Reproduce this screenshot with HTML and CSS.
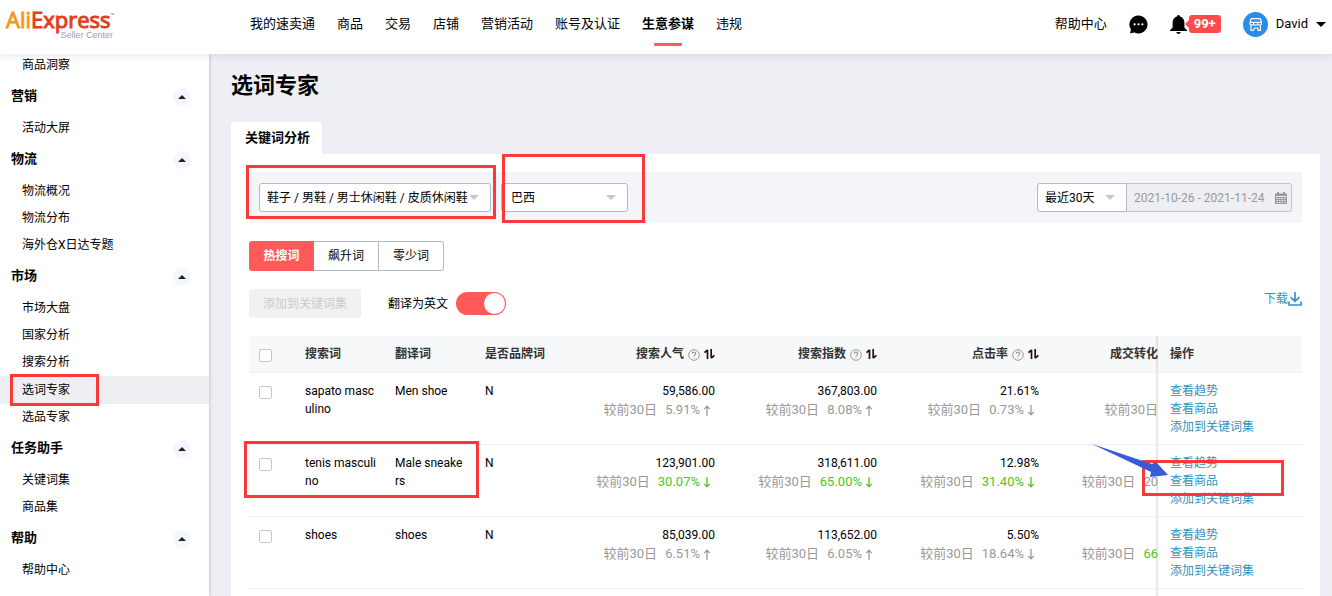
FILE: index.html
```html
<!DOCTYPE html>
<html lang="zh-CN">
<head>
<meta charset="utf-8">
<title>选词专家</title>
<link rel="stylesheet" href="styles.css">
</head>
<body>
<svg class="defs" aria-hidden="true">
  <symbol id="up" viewBox="0 0 8 12"><path d="M4 12V1.5M1 4.5L4 1.2L7 4.5" fill="none" stroke="currentColor" stroke-width="1.4"/></symbol>
  <symbol id="down" viewBox="0 0 8 12"><path d="M4 0V10.5M1 7.5L4 10.8L7 7.5" fill="none" stroke="currentColor" stroke-width="1.4"/></symbol>
  <symbol id="help" viewBox="0 0 12 12"><circle cx="6" cy="6" r="5.3" fill="none" stroke="#999"/><path d="M4.2 4.8C4.2 2.6 7.8 2.6 7.8 4.8C7.8 6 6 6 6 7.3M6 8.2V9.3" fill="none" stroke="#999" stroke-width="1.1"/></symbol>
  <symbol id="sort" viewBox="0 0 11 10"><path d="M3.5 10V.8M.5 3.6L3.6 1M7.2 0V9.2M10.4 6.4L7.2 9" fill="none" stroke="#2a0d0d" stroke-width="1.7"/></symbol>
</svg>
<header class="topbar">
  <a class="logo" href="#"><span class="logo-name"><span class="logo-ali">Ali</span>Express<span class="logo-tm">™</span></span><span class="logo-sub">Seller Center</span></a>
  <nav class="nav">
    <a href="#">我的速卖通</a><a href="#">商品</a><a href="#">交易</a><a href="#">店铺</a><a href="#">营销活动</a><a href="#">账号及认证</a><a href="#" class="current">生意参谋</a><a href="#">违规</a>
  </nav>
  <div class="tools">
    <a href="#">帮助中心</a>
    <button class="icon-btn chat" aria-label="消息"><svg width="19" height="19" viewBox="0 0 19 19"><path d="M9.5.5A9 9 0 1 1 5.6 17.6L1 18.2L2 14.6A9 9 0 0 1 9.5.5Z"/><g fill="#fff"><circle cx="5.6" cy="9.3" r="1.1"/><circle cx="9.5" cy="9.3" r="1.1"/><circle cx="13.4" cy="9.3" r="1.1"/></g></svg></button>
    <button class="icon-btn bell" aria-label="通知"><svg width="17" height="19" viewBox="0 0 17 19"><path d="M8.5 0C9.6 0 10 .8 10 1.6C12.8 2.3 14.4 4.7 14.4 7.6V12.5L17 15.2V16H0V15.2L2.6 12.5V7.6C2.6 4.7 4.2 2.3 7 1.6C7 .8 7.4 0 8.5 0ZM6.3 17H10.7C10.5 18.3 9.6 19 8.5 19S6.5 18.3 6.3 17Z"/></svg><span class="count">99+</span></button>
    <button class="icon-btn user"><svg width="25" height="25" viewBox="0 0 25 25"><circle cx="12.5" cy="12.5" r="12.5" fill="#2b8ce6"/><path d="M7.5 10V8Q7.5 6.7 9 6.7H16.5Q18 6.7 18 8V10M6.5 10.3H19M7 10.5V12Q7 13.2 8.6 13.2T10.6 12V10.5M10.6 12Q10.8 13.2 12.7 13.2T14.8 12V10.5M14.8 12Q15 13.2 16.7 13.2T18.5 12V10.5M8 13.4V18.5H10.3L11.5 16H15V18.5H17.4V13.4" fill="none" stroke="#fff" stroke-width="1.2"/></svg>David<svg width="10" height="5" viewBox="0 0 10 5"><path d="M0 0H10L5 5Z"/></svg></button>
  </div>
</header>
<div class="body">
  <aside class="sidebar">
    <ul class="menu">
      <li><a href="#">商品洞察</a></li>
      <li><button class="group">营销<i></i></button></li>
      <li><a href="#">活动大屏</a></li>
      <li><button class="group">物流<i></i></button></li>
      <li><a href="#">物流概况</a></li>
      <li><a href="#">物流分布</a></li>
      <li><a href="#">海外仓X日达专题</a></li>
      <li><button class="group">市场<i></i></button></li>
      <li><a href="#">市场大盘</a></li>
      <li><a href="#">国家分析</a></li>
      <li><a href="#">搜索分析</a></li>
      <li><a href="#" class="active">选词专家</a></li>
      <li><a href="#">选品专家</a></li>
      <li><button class="group">任务助手<i></i></button></li>
      <li><a href="#">关键词集</a></li>
      <li><a href="#">商品集</a></li>
      <li><button class="group">帮助<i></i></button></li>
      <li><a href="#">帮助中心</a></li>
    </ul>
  </aside>
  <main class="main">
    <h1>选词专家</h1>
    <button class="tab">关键词分析</button>
    <section class="panel">
      <div class="filters">
        <select class="field category" aria-label="类目"><option>鞋子 / 男鞋 / 男士休闲鞋 / 皮质休闲鞋</option></select>
        <select class="field country" aria-label="国家"><option>巴西</option></select>
        <div class="dates">
          <select class="field period" aria-label="周期"><option>最近30天</option></select>
          <label class="range"><input type="text" value="2021-10-26 - 2021-11-24" aria-label="日期范围" readonly>
            <svg width="12" height="12" viewBox="0 0 12 12"><path d="M0 1.5H2V0H4V1.5H8V0H10V1.5H12V12H0Z" fill="#999"/><path d="M1 4.5H11" stroke="#eeeff3"/><path d="M1.5 6.5H11M1.5 8.5H11M1.5 10.5H11" stroke="#eeeff3" stroke-dasharray="1.5 1"/></svg></label>
        </div>
      </div>
      <div class="segments"><button class="on">热搜词</button><button>飙升词</button><button>零少词</button></div>
      <div class="actions">
        <button class="add" disabled>添加到关键词集</button>
        <label class="translate">翻译为英文<input type="checkbox" class="switch" checked></label>
        <a class="download" href="#">下载<svg width="14" height="14" viewBox="0 0 14 14"><path d="M7 0V9M2.6 5.2L7 9.4L11.4 5.2M1 9.5V13H13V9.5" fill="none" stroke="currentColor" stroke-width="1.7"/></svg></a>
      </div>
      <div class="table-wrap">
        <table>
          <colgroup><col class="c-check"><col class="c-word"><col class="c-word"><col class="c-brand"><col class="c-num"><col class="c-num"><col class="c-num"><col class="c-cut"><col class="c-op"></colgroup>
          <thead><tr>
            <th><input type="checkbox" aria-label="全选"></th><th>搜索词</th><th>翻译词</th><th>是否品牌词</th>
            <th class="num">搜索人气<svg class="help"><use href="#help"/></svg><svg class="sort"><use href="#sort"/></svg></th>
            <th class="num">搜索指数<svg class="help"><use href="#help"/></svg><svg class="sort"><use href="#sort"/></svg></th>
            <th class="num">点击率<svg class="help"><use href="#help"/></svg><svg class="sort"><use href="#sort"/></svg></th>
            <th class="cut">成交转化</th>
            <th class="op">操作</th>
          </tr></thead>
          <tbody>
            <tr>
              <td><input type="checkbox" aria-label="sapato masculino"></td><td class="word">sapato masculino</td><td class="word">Men shoe</td><td>N</td>
              <td class="num">59,586.00<div class="trend">较前30日<span>5.91%<svg><use href="#up"/></svg></span></div></td>
              <td class="num">367,803.00<div class="trend">较前30日<span>8.08%<svg><use href="#up"/></svg></span></div></td>
              <td class="num">21.61%<div class="trend">较前30日<span>0.73%<svg><use href="#down"/></svg></span></div></td>
              <td class="cut"><div class="trend">较前30日</div></td>
              <td class="op"><a href="#">查看趋势</a><a href="#">查看商品</a><a href="#">添加到关键词集</a></td>
            </tr>
            <tr>
              <td><input type="checkbox" aria-label="tenis masculino"></td><td class="word">tenis masculino</td><td class="word">Male sneakers</td><td>N</td>
              <td class="num">123,901.00<div class="trend">较前30日<span class="green">30.07%<svg><use href="#down"/></svg></span></div></td>
              <td class="num">318,611.00<div class="trend">较前30日<span class="green">65.00%<svg><use href="#down"/></svg></span></div></td>
              <td class="num">12.98%<div class="trend">较前30日<span class="green">31.40%<svg><use href="#down"/></svg></span></div></td>
              <td class="cut"><div class="trend">较前30日<span>20</span></div></td>
              <td class="op"><a href="#">查看趋势</a><a href="#">查看商品</a><a href="#">添加到关键词集</a></td>
            </tr>
            <tr>
              <td><input type="checkbox" aria-label="shoes"></td><td class="word">shoes</td><td class="word">shoes</td><td>N</td>
              <td class="num">85,039.00<div class="trend">较前30日<span>6.51%<svg><use href="#up"/></svg></span></div></td>
              <td class="num">113,652.00<div class="trend">较前30日<span>6.05%<svg><use href="#up"/></svg></span></div></td>
              <td class="num">5.50%<div class="trend">较前30日<span>18.64%<svg><use href="#down"/></svg></span></div></td>
              <td class="cut"><div class="trend">较前30日<span class="green">66</span></div></td>
              <td class="op"><a href="#">查看趋势</a><a href="#">查看商品</a><a href="#">添加到关键词集</a></td>
            </tr>
            <tr class="next"><td></td><td></td><td></td><td></td><td></td><td></td><td></td><td class="cut"></td><td class="op"></td></tr>
          </tbody>
        </table>
      </div>
    </section>
  </main>
</div>
<div class="marks" aria-hidden="true">
  <div class="mark mark-menu"></div>
  <div class="mark mark-category"></div>
  <div class="mark mark-country"></div>
  <div class="mark mark-row"></div>
  <div class="mark mark-link"></div>
  <svg class="arrow" width="78" height="36" viewBox="0 0 78 36"><path d="M0 0L60 20L64 18L76 31L58 33L59 28Z" fill="#3a5bd9"/></svg>
</div>
</body>
</html>
```
FILE: styles.css
```css
* { box-sizing: border-box; }
body {
  margin: 0;
  height: 100vh;
  overflow: hidden;
  display: flex;
  flex-direction: column;
  position: relative;
  background: #eeeff4;
  color: #000;
  font: 12px/18px Roboto, "Noto Sans CJK SC", sans-serif;
}
a { color: inherit; text-decoration: none; }
button, select, input { font: inherit; color: inherit; margin: 0; }
button { border: 0; padding: 0; background: none; }
.defs { display: none; }

/* top bar */
.topbar {
  flex: none;
  display: flex;
  align-items: center;
  height: 54px;
  padding: 0 6px 6px;
  background: #fff;
  box-shadow: 0 1px 8px rgba(30, 40, 90, .12);
  z-index: 2;
  font-size: 13px;
}
.logo { display: flex; flex-direction: column; width: 244px; font-family: "Open Sans", sans-serif; }
.logo-name { display: flex; font-size: 22px; line-height: 22px; font-weight: 500; color: #e43d1c; -webkit-text-stroke: 1px; }
.logo-ali { color: #f8981d; }
.logo-tm { font-size: 5px; line-height: 14px; -webkit-text-stroke: 0; color: #777; }
.logo-sub { width: 107px; text-align: right; font: 9px/10px "Liberation Sans", sans-serif; color: #99a3b5; }
.nav { display: flex; gap: 22px; }
.nav a { position: relative; }
.nav .current { font-weight: bold; }
.nav .current::after {
  content: "";
  position: absolute;
  left: 50%;
  bottom: -13px;
  width: 28px;
  height: 3px;
  margin-left: -14px;
  border-radius: 1px;
  background: #ff5a5a;
}
.tools { display: flex; align-items: center; gap: 22px; margin-left: auto; }
.icon-btn { display: flex; align-items: center; }
.count {
  position: relative;
  margin-left: 2px;
  padding: 0 5px;
  border-radius: 3px;
  background: #ff4b4b;
  color: #fff;
  font-weight: bold;
}
.count::before {
  content: "";
  position: absolute;
  left: -4px;
  top: 4px;
  border: 5px solid transparent;
  border-left: 0;
  border-right-color: #ff4b4b;
}
.user { gap: 8px; }

/* sidebar */
.body { flex: 1; display: flex; min-height: 0; }
.sidebar { flex: none; width: 209px; overflow: hidden; background: #fff; box-shadow: 1px 0 3px rgba(0, 0, 0, .16); z-index: 1; }
.menu { list-style: none; margin: -2px 0 0; padding: 0; }
.menu a { display: block; padding-left: 22px; line-height: 27px; }
.menu .active { line-height: 28px; background: #eeeff3; }
.group {
  display: flex;
  align-items: center;
  justify-content: space-between;
  width: 100%;
  height: 36px;
  padding: 0 18px 3px 11px;
  font-size: 13px;
  font-weight: bold;
}
.group i { display: grid; place-items: center; width: 18px; height: 18px; margin-top: 3px; border-radius: 50%; background: #f3f7fe; }
.group i::after { content: ""; border: 4px solid transparent; border-top: 0; border-bottom-color: #222; }

/* content */
.main { flex: 1; min-width: 0; padding: 16px 12px 0 22px; display: flex; flex-direction: column; align-items: flex-start; }
h1 { margin: 0 0 20px; font-size: 22px; line-height: 32px; }
.tab { height: 32px; padding: 0 12px 0 14px; border-radius: 4px 4px 0 0; background: #fff; font-size: 13px; font-weight: bold; }
.panel { flex: 1; align-self: stretch; min-height: 0; padding: 18px 18px 0; background: #fff; display: flex; flex-direction: column; gap: 18px; }
.filters { flex: none; display: flex; gap: 10px; padding: 11px 10px; background: #f4f5f9; }
.field {
  appearance: none;
  height: 29px;
  padding: 0 7px;
  border: 1px solid #b5b9c2;
  border-radius: 3px;
  background: #fff url("data:image/svg+xml,%3Csvg xmlns='http://www.w3.org/2000/svg' width='10' height='5'%3E%3Cpath d='M0 0H10L5 5Z' fill='%23c8c8c8'/%3E%3C/svg%3E") no-repeat right 11px center;
}
.category { width: 232px; }
.country { width: 127px; padding-left: 9px; }
.dates { display: flex; margin-left: auto; }
.period { width: 90px; border-radius: 3px 0 0 3px; }
.range {
  display: flex;
  align-items: center;
  width: 165px;
  padding: 0 4px 0 7px;
  border: 1px solid #c4c6cc;
  border-left: 0;
  border-radius: 0 3px 3px 0;
  background: #eeeff3;
  color: #999;
}
.range input { flex: 1; min-width: 0; padding: 0; border: 0; background: none; }
.segments { flex: none; display: flex; }
.segments button { width: 65px; height: 30px; border: 1px solid #b5b9c2; border-left: 0; }
.segments button:last-child { border-radius: 0 3px 3px 0; }
.segments .on { border: 0; border-radius: 3px 0 0 3px; background: #ff5a5a; color: #fff; font-weight: bold; }
.actions { flex: none; display: flex; align-items: center; gap: 27px; }
.add { height: 29px; padding: 0 14px; border-radius: 3px; background: #f1f1f1; color: #ccc; }
.translate { display: flex; align-items: center; gap: 8px; }
.switch { appearance: none; display: flex; justify-content: flex-end; width: 50px; height: 23px; padding: 1px; border-radius: 12px; background: #ff5a5a; }
.switch::after { content: ""; width: 21px; height: 21px; border-radius: 50%; background: #fff; }
.download { display: flex; align-items: center; align-self: flex-start; margin-left: auto; padding-top: 1px; color: #2f95c0; }

/* table */
.table-wrap { flex: 1; min-height: 0; overflow: hidden; }
table { width: 100%; table-layout: fixed; border-collapse: separate; border-spacing: 0; }
.c-check { width: 40px; }
.c-word { width: 90px; }
.c-brand { width: 100px; }
.c-num { width: 162px; }
.c-cut { width: 103px; }
th, td { text-align: left; vertical-align: top; border-bottom: 1px solid #eeeff3; }
th { padding: 9px 16px; background: #f7f8fa; color: #333; white-space: nowrap; }
td { padding: 9px 16px 8px; }
.word { padding-right: 2px; word-break: break-all; }
.word + .word { padding-right: 4px; }
th:first-child, td:first-child { padding-left: 10px; padding-right: 0; }
.num { text-align: right; }
table input { appearance: none; display: block; width: 13px; height: 13px; margin-top: 4px; border: 1px solid #c4c6cc; border-radius: 2px; background: #fff; }
.help, .sort { display: inline-block; margin-left: 4px; }
.help { width: 12px; height: 12px; vertical-align: -3px; }
.sort { width: 11px; height: 10px; vertical-align: -1px; }
.trend { display: flex; justify-content: flex-end; gap: 8px; font-size: 13px; line-height: 20px; color: #999; white-space: nowrap; }
.trend span { display: flex; align-items: center; gap: 3px; padding-right: 4px; }
.trend svg { width: 8px; height: 11px; }
.trend .green { color: #52c41a; }
.cut {
  padding-right: 0;
  overflow: hidden;
  text-align: right;
  background-image: linear-gradient(to left, rgba(0, 0, 0, .13), transparent 3px);
}
td.cut { padding-top: 27px; }
.cut .trend span { padding-right: 0; }
.op { padding-left: 12px; }
.op a { display: block; color: #2f95c0; }
.next td { height: 72px; }

/* callouts drawn over the page */
.marks { position: absolute; inset: 0; z-index: 3; pointer-events: none; }
.mark { position: absolute; border: 3px solid #fd3838; }
.mark-menu { left: 10px; top: 374px; width: 89px; height: 32px; }
.mark-category { left: 246px; top: 165px; width: 250px; height: 54px; }
.mark-country { left: 502px; top: 154px; width: 143px; height: 69px; }
.mark-row { left: 244px; top: 441px; width: 235px; height: 57px; }
.mark-link { left: 1142px; top: 460px; width: 142px; height: 36px; }
.arrow { position: absolute; left: 1092px; top: 444px; }
```
